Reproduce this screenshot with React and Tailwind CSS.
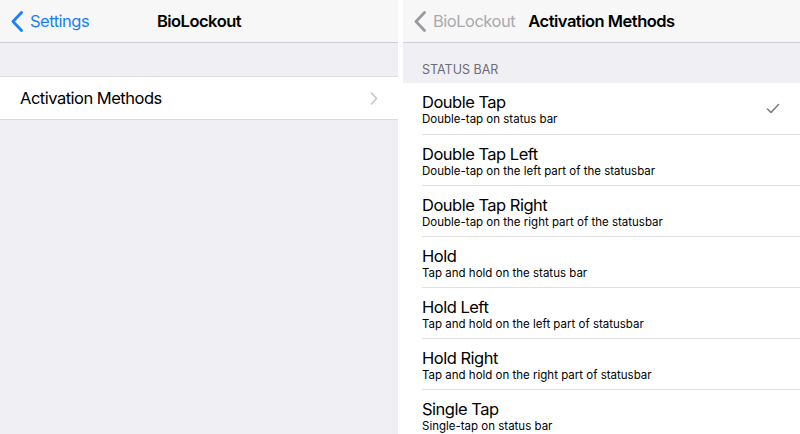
import React from "react";

const rows = [
  ["Double Tap", "Double-tap on status bar", true],
  ["Double Tap Left", "Double-tap on the left part of the statusbar"],
  ["Double Tap Right", "Double-tap on the right part of the statusbar"],
  ["Hold", "Tap and hold on the status bar"],
  ["Hold Left", "Tap and hold on the left part of statusbar"],
  ["Hold Right", "Tap and hold on the right part of statusbar"],
  ["Single Tap", "Single-tap on status bar"],
];

function BackChevron({ color }) {
  return (
    <svg width="13" height="21" viewBox="0 0 13 21" fill="none">
      <path d="M10.5 1.5 L2 10.5 L10.5 19.5" stroke={color} strokeWidth="2.8" strokeLinecap="round" strokeLinejoin="round" />
    </svg>
  );
}

export default function App() {
  return (
    <div
      className="flex w-[800px] h-[434px] overflow-hidden bg-white text-black"
      style={{ fontFamily: "Inter, 'Noto Sans', sans-serif" }}
    >
      {/* Left panel */}
      <div className="w-[398px] shrink-0 h-full bg-[#efeff4] flex flex-col">
        <div className="relative shrink-0 h-[43px] bg-[#f7f7f7] border-b border-[#cfcfd3] flex items-center">
          <div className="flex items-center pl-[11px] gap-[6px] text-[#1a7ff8] text-[16.5px] tracking-[-0.5px]">
            <BackChevron color="#1a7ff8" />
            <span>Settings</span>
          </div>
          <div className="absolute inset-0 flex items-center justify-center text-[16.5px] font-semibold tracking-[-0.5px]">
            BioLockout
          </div>
        </div>
        <div className="h-[33px] shrink-0" />
        <div className="h-[44px] shrink-0 bg-white border-y border-[#dcdce0] flex items-center justify-between pl-[20px] pr-[20px]">
          <span className="text-[16.5px] tracking-[-0.5px]">Activation Methods</span>
          <svg width="8" height="13" viewBox="0 0 8 13" fill="none">
            <path d="M1.5 1 L6.5 6.5 L1.5 12" stroke="#c4c4c9" strokeWidth="1.5" strokeLinecap="round" strokeLinejoin="round" />
          </svg>
        </div>
      </div>

      <div className="w-[5px] shrink-0 h-full bg-white" />

      {/* Right panel */}
      <div className="flex-1 h-full flex flex-col bg-white">
        <div className="relative shrink-0 h-[43px] bg-[#f7f7f7] border-b border-[#cfcfd3] flex items-center">
          <div className="flex items-center pl-[11px] gap-[6px] text-[#a9a9ae] text-[16.5px] tracking-[-0.5px]">
            <BackChevron color="#9a9a9f" />
            <span>BioLockout</span>
          </div>
          <div className="absolute inset-0 flex items-center justify-center text-[16.5px] font-semibold tracking-[-0.5px]">
            Activation Methods
          </div>
        </div>
        <div className="h-[40px] shrink-0 bg-[#efeff4] flex items-end pl-[19px] pb-[6px] text-[12.5px] leading-[15px] text-[#6d6d72]">
          STATUS BAR
        </div>
        <div className="flex flex-col shrink-0">
          {rows.map(([t, s, checked], i) => (
            <div key={t} className="pl-[19px] shrink-0">
              <div className={`h-[51px] flex items-center justify-between pr-[20px] ${i === 0 ? "" : "border-t border-[#e0e0e4]"}`}>
                <div className="flex flex-col pt-[1px]">
                  <span className="text-[16.5px] leading-[20px] tracking-[-0.5px]">{t}</span>
                  <span className="text-[11.5px] leading-[14px]">{s}</span>
                </div>
                {checked && (
                  <svg width="14" height="11" viewBox="0 0 14 11" fill="none">
                    <path d="M1.5 6 L5 9.5 L12.5 1.5" stroke="#7b7b80" strokeWidth="1.6" strokeLinecap="round" strokeLinejoin="round" />
                  </svg>
                )}
              </div>
            </div>
          ))}
        </div>
      </div>
    </div>
  );
}
